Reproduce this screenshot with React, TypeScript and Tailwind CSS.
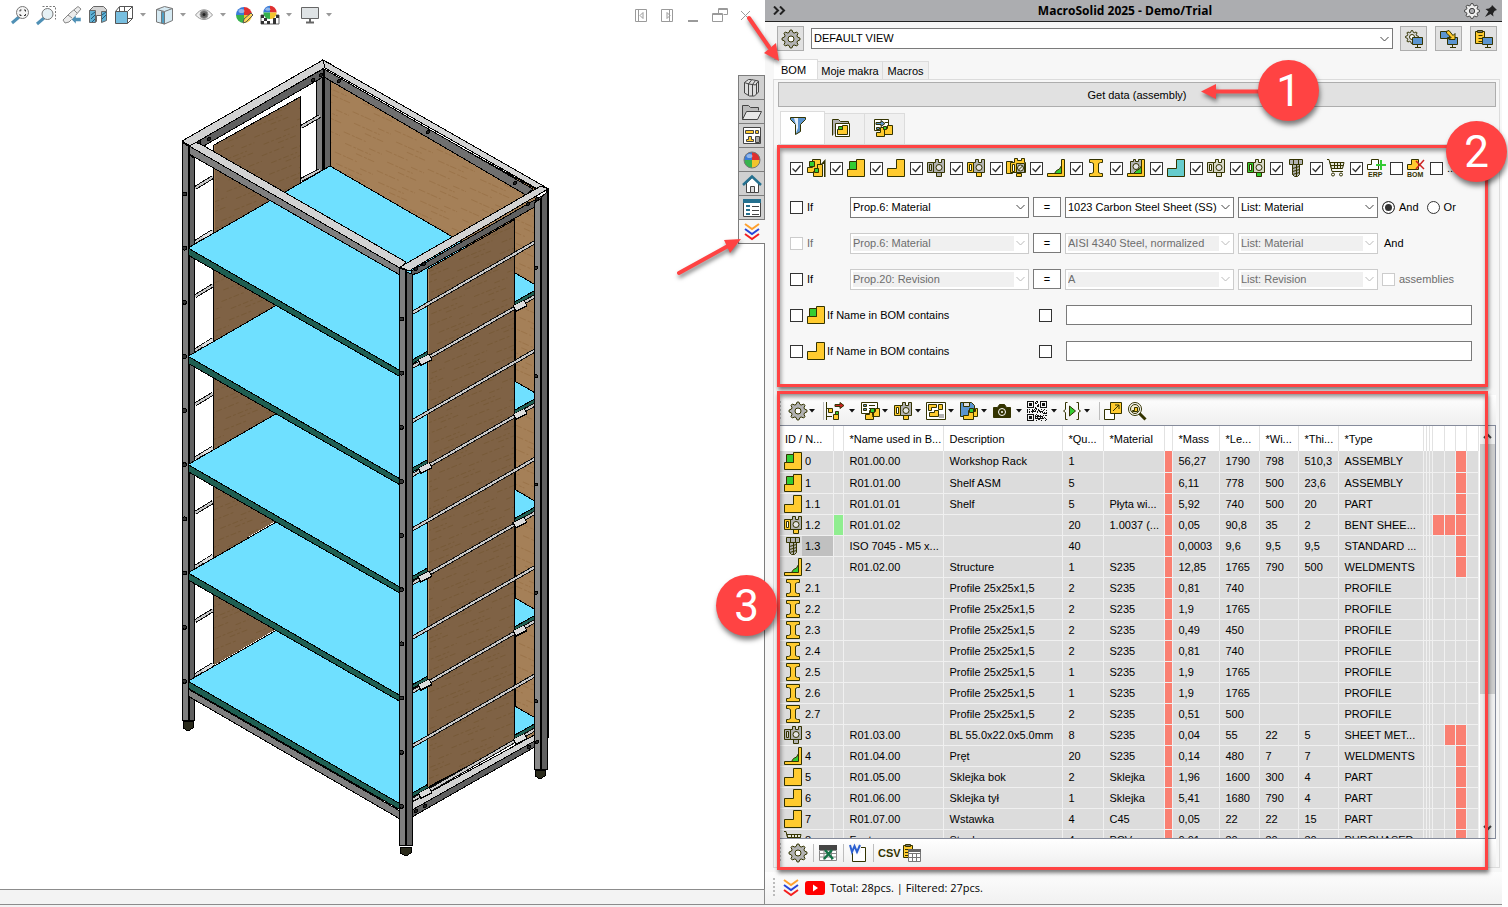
import type { ReactNode } from 'react';

const INK = '#333300';
const GOLD = '#ffcb2f';
const GREEN = '#33cc33';
const STEEL = '#b2b2b2';
const BLUE = '#5b94cf';

const gearPoints = (c: number, outer: number, inner: number, teeth = 8) =>
  Array.from({ length: teeth * 4 }, (_, i) => {
    const angle = ((i - 0.5) / (teeth * 4)) * Math.PI * 2;
    const r = i % 4 < 2 ? outer : inner;
    return `${(c + r * Math.cos(angle)).toFixed(2)},${(c + r * Math.sin(angle)).toFixed(2)}`;
  }).join(' ');

const qrCells = Array.from({ length: 400 }, (_, i) => ({ x: i % 20, y: Math.floor(i / 20) })).filter(
  ({ x, y }) => !(x < 8 && y < 8) && !(x > 11 && y < 8) && !(x < 8 && y > 11) && (x * 7 + y * 13 + x * y * 3 + ((x ^ y) << 1)) % 5 < 2,
);

const Sheet = ({ left, right, tab, slot = '#fff' }: { left: string; right: string; tab: string; slot?: string }) => (
  <>
    <path d="M.5 3.5h6v10h-6z" fill={left} />
    <path d="M9.5 13.5h5v4h-5z" fill={tab} />
    <path d="M6.5 3.5h2v-3h3v3h3v-3h3v13h-11z" fill={right} />
    <path d="M2.5 5.5h2v6h-2z" fill={slot} />
    <circle cx="12" cy="8.5" r="3" fill="#e4e4e4" />
  </>
);

const icons: Record<string, ReactNode> = {
  multi: (
    <>
      <path d="M.5 8.5h5v-8h8v5h-3v8h-10z" fill={GOLD} />
      <path d="M6.5 12.5h4v-7h5v12h-9z" fill={GOLD} />
      <path d="M2.5 2.5h5v5h-5zM7.5 9.5h4v4h-4z" fill={GREEN} />
      <path d="M14 5l4.5-5v18H17V5z" fill={INK} stroke="none" />
    </>
  ),
  assembly: (
    <>
      <path d="M.5 10.5h9v-10h8v17h-17z" fill={GOLD} />
      <path d="M2.5 2.5h7v8h-7z" fill={GREEN} />
    </>
  ),
  part: <path d="M.5 9.5h9v-9h8v17h-17z" fill={GOLD} />,
  tealPart: <path d="M.5 9.5h9v-9h8v17h-17z" fill="#66cccc" />,
  sheet: <Sheet left={STEEL} right={STEEL} tab={STEEL} slot="#d0d0d0" />,
  bent: <Sheet left={GOLD} right={STEEL} tab={GOLD} />,
  bentMulti: (
    <>
      <path d="M-.5 2.5h6v12h-6z" fill={GOLD} />
      <path d="M9.5 14.5h5v3h-5z" fill={GOLD} />
      <path d="M3.5 3.5h4v-4h3v2h4v-2h3v4h1v10h-15z" fill={GOLD} />
      <path d="M5.5 5.5h2v7h-2z" fill="#fff" />
      <path d="M9.5 4.5h8v9h-8z" fill={STEEL} />
      <circle cx="13.5" cy="9" r="3" fill="#e4e4e4" />
      <path d="M11.5 11l4-4" />
    </>
  ),
  weld: (
    <>
      <path d="M7.5 14.5l2-3 3-1.5 2-3.5v8z" fill={GREEN} />
      <path d="M14.5.5h3v17h-17v-3h14z" fill={GOLD} />
    </>
  ),
  profile: <path d="M2.5.5h13v3h-2l-2 1v9l2 1h2v3h-13v-3h2l2-1v-9l-2-1h-2z" fill={GOLD} />,
  weldSheet: (
    <>
      <path d="M3.5 2.5h3v-2h2v2h3v-2h3v14h-11z" fill={STEEL} />
      <circle cx="9" cy="7.5" r="3" fill="#e4e4e4" />
      <path d="M6.5 14.5l3-3 3-1.5 2-3.5v8z" fill={GREEN} />
      <path d="M14.5.5h3v17h-17v-3h14z" fill={GOLD} />
    </>
  ),
  lightSheet: <Sheet left="#d8d8c8" right="#d8d8c8" tab="#d8d8c8" />,
  greenSheet: <Sheet left={GREEN} right="#d8d8c8" tab={GREEN} />,
  bolt: (
    <>
      <path d="M2.5.5h13v5h-13z" fill={STEEL} />
      <path d="M5.5 5.5h7v10l-2 2h-3l-2-2z" fill={STEEL} />
      <path d="M6.5.5v5M11.5.5v5M5.5 9.5l7-2M5.5 12.5l7-2M5.5 15.5l7-2M9.5 6v11" />
    </>
  ),
  cart: (
    <>
      <path d="M0 .5h2l3 12h11" fill="none" />
      <path d="M3 3.5h14l-1.5 6h-11zM3.5 6.5h13M7.5 3.5v6M10.5 3.5v6M13.5 3.5v6" fill="#e6e6da" />
      <circle cx="6" cy="15.5" r="1.5" fill="none" />
      <circle cx="14" cy="15.5" r="1.5" fill="none" />
    </>
  ),
  erp: (
    <>
      <path d="M.5 5.5h4v-5h7v10h-11z" fill="#fff" />
      <path d="M14 1v10M9 6h10" stroke={GREEN} strokeWidth="2" />
      <text x="1" y="18" fontSize="7" fontWeight="700" fill={INK} stroke="none">ERP</text>
    </>
  ),
  bomRemove: (
    <>
      <path d="M.5 5.5h4v-5h7v10h-11z" fill={GOLD} />
      <path d="M9 2l8 8M17 1l-8 9" stroke="#cc2222" strokeWidth="1.5" />
      <text x="0" y="18" fontSize="7" fontWeight="700" fill={INK} stroke="none">BOM</text>
    </>
  ),
  gear: (
    <>
      <polygon points={gearPoints(9, 9, 6.8)} fill={STEEL} />
      <circle cx="9" cy="9" r="3" fill="#fff" />
    </>
  ),
  gearScreen: (
    <>
      <polygon points={gearPoints(7, 6.5, 4.8)} fill="#d8d8d8" />
      <circle cx="7" cy="7" r="2.5" fill="#fff" />
      <path d="M7.5 7.5h10v7h-10z" fill={BLUE} />
      <path d="M12.5 15v2M10 17.5h6" />
    </>
  ),
  moveScreen: (
    <>
      <path d="M.5 1.5h9v7h-9zM7.5 7.5h10v7h-10z" fill={BLUE} />
      <path d="M6 1.5l3-1 4 5 2-2v6h-6l2-2-4-4z" fill={GOLD} />
      <path d="M12.5 15v2M10 17.5h6" />
    </>
  ),
  pasteScreen: (
    <>
      <path d="M.5 1.5h9v12h-9z" fill={GOLD} />
      <path d="M3.5 5.5h4M3.5 8.5h4M3.5 11.5h4" />
      <path d="M2.5.5h5v2h-5z" fill="#777" />
      <path d="M7.5 7.5h10v7h-10z" fill={BLUE} />
      <path d="M12.5 15v2M10 17.5h6" />
    </>
  ),
  funnel: (
    <>
      <path d="M.5.5h15v2l-5 5v7l-5 3v-10l-5-5z" fill={BLUE} />
      <path d="M4 1h4v10l-2 5V8z" fill="#e9f1fa" stroke="none" />
    </>
  ),
  folderPart: (
    <>
      <path d="M.5 16.5v-16h6l2 2h8v3" fill={STEEL} />
      <path d="M3.5 4.5h14v13h-14z" fill="#fff" />
      <path d="M5.5 10.5h5v-4h5v9h-10z" fill={GOLD} />
      <path d="M6.5 7.5h4v3h-4z" fill={GREEN} />
    </>
  ),
  formPart: (
    <>
      <path d="M.5.5h14v11h-14z" fill="#fff" />
      <path d="M2 3.5h5v-2l4 3-4 3v-2H2z" fill={BLUE} />
      <path d="M2.5 8.5h3v2h-3zM11 3.5h3" fill={BLUE} />
      <path d="M2.5 13.5h4v-5h4v9h-8zM10.5 12.5v-3h3v-3h5v9h-8z" fill={GOLD} />
      <path d="M9.5 7.5h3v3h-3z" fill={GREEN} />
    </>
  ),
  tree: (
    <>
      <path d="M.5 0v18M1 6.5h3M1 14.5h5" />
      <path d="M2.5 6.5h4v4h-4zM7.5 12.5h5v5h-5z" fill={GOLD} />
      <path d="M9 2.5h5v-2l4 3-4 3v-2H9z" fill="#cc2222" />
      <path d="M9.5 9.5h3v3h-3z" fill={GREEN} />
    </>
  ),
  formAsm: (
    <>
      <path d="M.5.5h16v11h-16z" fill="#fff" />
      <path d="M2.5 2.5h3v2h-3zM2.5 6.5h3v2h-3z" fill={BLUE} />
      <path d="M8 3.5h6M8 6.5h6" />
      <path d="M4.5 12.5h4v-4h4v9h-8zM11.5 13.5v-4h3v-3h4v8h-7z" fill={GOLD} />
      <path d="M9.5 6.5h4v4h-4z" fill={GREEN} />
    </>
  ),
  drawing: (
    <>
      <path d="M-.5.5h19v17h-19z" fill="#fff" />
      <path d="M1.5 2.5h8v3h-5v3h-3zM2.5 14.5v-4h5v-2h4v6zM11.5 2.5h4v5h-4z" fill={GOLD} />
      <path d="M12 12h5v4h-5z" fill={STEEL} stroke="none" />
    </>
  ),
  save: (
    <>
      <path d="M.5.5h11l3 3v11h-14z" fill={BLUE} />
      <path d="M3.5.5h6v4h-6z" fill="#ddd" />
      <path d="M3.5 13.5h5v-5h5v9h-10z" fill={GOLD} />
      <path d="M13.5 14.5v-5h2v-3h2v8z" fill={GOLD} />
      <path d="M9.5 6.5h4v4h-4z" fill={GREEN} />
    </>
  ),
  camera: (
    <>
      <path d="M.5 5.5h4l2-3h5l2 3h4v10h-17z" fill={INK} />
      <circle cx="9" cy="10" r="3.5" fill={INK} stroke="#fff" />
      <circle cx="9" cy="10" r="1" fill="#fff" stroke="none" />
    </>
  ),
  play: (
    <>
      <path d="M4.5.5h-2v7l-2 1.5 2 1.5v7h2M13.5.5h2v7l2 1.5-2 1.5v7h-2" fill="none" />
      <path d="M6.5 4v10l6-5z" fill={GREEN} />
    </>
  ),
  popout: (
    <>
      <path d="M.5 7.5h10v10h-10z" fill="#fff" />
      <path d="M6.5.5h11v11h-11z" fill={GOLD} />
      <path d="M9 9l6-6M11 3h4v4" />
    </>
  ),
  findPart: (
    <>
      <circle cx="7" cy="7" r="6.5" fill="#fff" />
      <circle cx="7" cy="7" r="4.5" fill="#f3ecd0" />
      <path d="M4.5 8.5h2v-3h3v4h-5z" fill={GOLD} />
      <path d="M11.5 11.5l6 6" strokeWidth="3" />
    </>
  ),
  excel: (
    <>
      <path d="M0 1h18v5H0z" fill="#444" stroke="none" />
      <path d="M.5 6.5h17v10h-17zM.5 9.5h17M.5 13h17M5 6v10M12.5 6v10" fill="#fff" stroke="#888" />
      <path d="M6 6l8 9M13 6l-8 9" stroke="#157347" strokeWidth="2.5" />
    </>
  ),
  word: (
    <>
      <path d="M3.5 3.5h13v14h-13z" fill="#fff" />
      <path d="M0 0h12v9H0z" fill="#f7f7f7" stroke="none" />
      <path d="M1 1l2 7 2.5-6L8 8l3-7" fill="none" stroke="#2b5fd0" strokeWidth="2" />
    </>
  ),
  pasteTable: (
    <>
      <path d="M.5 1.5h9v12h-9z" fill={GOLD} />
      <path d="M2.5.5h5v2h-5z" fill="#777" />
      <path d="M2 5.5h3M2 8.5h3M2 11.5h3" />
      <path d="M5.5 5.5h12v12h-12zM5.5 9.5h12M5.5 13.5h12M9.5 9v8M13.5 9v8" fill="#fff" stroke="#777" />
      <path d="M5 5h13v3H5z" fill="#666" stroke="none" />
    </>
  ),
  chevrons: (
    <g fill="none" strokeWidth="2">
      <path d="M2 1l7 5 7-5" stroke="#ffa02e" />
      <path d="M2 6l7 5 7-5" stroke="#2745d8" />
      <path d="M2 11l7 5 7-5" stroke="#f41f1f" />
    </g>
  ),
  books: (
    <g fill="#ddd" stroke="#444">
      <path d="M1.5 3.5l4-3h3l2 .5 5 1v11l-4 4h-5l-5-3z" />
      <path d="M5.5 4.5v12M9.5 5v12M13.5 4v11M1.5 3.5l4 1.5 3-4M5.5 5l4 .5 3-4M9.5 5.5l3 .5 3-4" />
    </g>
  ),
  folder: (
    <g stroke="#444">
      <path d="M-.5 16.5v-14h6l2 2h8v3" fill="#bbb" />
      <path d="M-.5 16.5l4-8h15l-4 8z" fill="#e8e8e8" />
    </g>
  ),
  viewPalette: (
    <g stroke="#444">
      <path d="M.5.5h17v16h-17z" fill="#fff" />
      <path d="M2.5 3.5h8v3h-8zM12.5 3.5h3v3h-3zM5.5 9.5h3v3h2v2h-7v-2h2z" fill={GOLD} />
      <path d="M12.5 9.5h4v6h-4z" fill="#aaa" />
    </g>
  ),
  house: (
    <g stroke="#444">
      <path d="M3.5 8v9.5h12V8l-6-6z" fill="#fff" />
      <path d="M7.5 11.5h4v6h-4z" fill="#ddd" />
      <path d="M0 10l9-8.5L18 10" fill="none" stroke="#25708f" strokeWidth="2.5" />
    </g>
  ),
  properties: (
    <g stroke="#444">
      <path d="M.5.5h17v17h-17z" fill="#fff" />
      <path d="M0 0h18v4H0z" fill="#25708f" stroke="none" />
      <path d="M3 6h4v2H3zM3 10h4v2H3zM3 14h4v2H3z" fill="#25708f" stroke="none" />
      <path d="M9 7.5h7M9 11.5h7M9 15.5h7" />
    </g>
  ),
};

const Ball = () => (
  <g stroke="none">
    <path d="M9 1a8 8 0 0 0-8 8h8z" fill="#3a7bd8" />
    <path d="M9 1v8h8a8 8 0 0 0-8-8z" fill="#df3030" />
    <path d="M17 9a8 8 0 0 1-8 8V9z" fill="#f2c42d" />
    <path d="M1 9a8 8 0 0 0 8 8V9z" fill="#37b24d" />
    <ellipse cx="6.5" cy="5" rx="3" ry="2" fill="#fff" opacity=".45" />
  </g>
);

icons.ball = <><Ball /><circle cx="9" cy="9" r="8" fill="none" stroke="#777" /></>;
icons.qr = (
  <g fill="#111" stroke="none" shapeRendering="crispEdges" transform="translate(-1 -1)">
    {[[0, 0], [13, 0], [0, 13]].map(([x, y]) => (
      <path key={`${x}-${y}`} fillRule="evenodd" d={`M${x} ${y}h7v7h-7zM${x + 1} ${y + 1}v5h5v-5zM${x + 2} ${y + 2}h3v3h-3z`} />
    ))}
    {qrCells.map(({ x, y }) => <rect key={`${x}.${y}`} x={x} y={y} width="1" height="1" />)}
  </g>
);

// heads-up view toolbar
icons.zoomFit = (
  <g stroke="#777">
    <path d="M8 11l-7 6" stroke="#4f90b5" strokeWidth="3" />
    <circle cx="11.5" cy="6.5" r="6" fill="#f4f4f4" />
    <path d="M9 5.5V4h1.5M13 4h1.5v1.5M14.5 8v1.5H13M10.5 9.5H9V8" fill="none" stroke="#333" />
  </g>
);
icons.zoomArea = (
  <g stroke="#777">
    <path d="M5.5.5h13v13" fill="none" strokeDasharray="2 1.5" />
    <path d="M7 12l-7 6" stroke="#4f90b5" strokeWidth="3" />
    <circle cx="10.5" cy="8" r="5.5" fill="#e6f1f5" />
  </g>
);
icons.previous = (
  <g stroke="#888">
    <path d="M0 14l7-7 8-6.5 3 2.5-6 7-6 6-4 1z" fill="#ececec" />
    <path d="M5 9l4 3M11 4l3 3" />
    <path d="M18 11.5h-5V9l-4.5 4.5L13 18v-2.5h5z" fill="#4f90b5" stroke="#fff" strokeWidth=".5" />
  </g>
);
icons.section = (
  <g stroke="#666">
    <path d="M.5 4.5l4-4h10l3 3v10l-5 2v-6h-5v6l-7-1z" fill="#d5d5d5" />
    <path d="M.5 4.5h6v12h-6zM12.5 5.5h5v9l-5 2z" fill="#5fb0d4" />
    <path d="M2 9l4-3M2 13l4-4M3 16l3-3M13 9l4-3M13 13l4-4" stroke="#1c5b7c" />
  </g>
);
icons.orient = (
  <g stroke="#555">
    <path d="M4.5.5h13v12h-5M.5 5.5l4-5M12.5 5.5l5-5M12.5 17.5l5-5M9.5.5v5M4.5 5V1" fill="none" />
    <path d="M.5 5.5h12v12h-12z" fill="#78bfe0" />
  </g>
);
icons.cube = (
  <g stroke="#777">
    <path d="M1.5 3.5l8-3 8 2v12l-8 3.5-8-2z" fill="#d6eaf3" />
    <path d="M6.5 5.5l3 1V18l-3-1z" fill="#4f9fc4" />
    <path d="M1.5 3.5l8 2 8-3M9.5 5.5V18" fill="none" />
  </g>
);
icons.eye = (
  <g stroke="#999">
    <path d="M.5 9c5-7 12-7 17 0-5 6-12 6-17 0z" fill="#efefef" />
    <circle cx="9" cy="8.5" r="4" fill="#666" />
    <circle cx="9" cy="8.5" r="1.5" fill="#222" stroke="none" />
  </g>
);
icons.appearance = (
  <>
    <Ball />
    <path d="M8 17l1-4 7-6 2 2-7 7z" fill="#ffd65a" stroke="#555" />
  </>
);
icons.scene = (
  <>
    <path d="M0 9h18v9H0z" fill="#fff" stroke="#666" />
    <path d="M0 9h3v3H0zM15 9h3v3h-3zM0 15h3v3H0zM3 12h3v3H3zM12 12h3v3h-3zM6 15h3v3H6zM12 15h3v3h-3z" fill="#333" stroke="none" />
    <g transform="translate(1.5 -1) scale(.83)"><Ball /></g>
  </>
);
icons.monitor = (
  <g stroke="#666">
    <path d="M.5 1.5h17v11h-17z" fill="#dfe3e5" />
    <path d="M9 13v3M5 16.5h8" strokeWidth="2" />
  </g>
);

const Icon = ({ name }: { name: string }) => (
  <svg width="18" height="18" viewBox="0 0 18 18" stroke={INK} fill="none" className="shrink-0 overflow-visible" aria-hidden="true">
    {icons[name]}
  </svg>
);

const DropArrow = ({ color = '#111' }: { color?: string }) => (
  <svg width="6" height="4" viewBox="0 0 6 4" aria-hidden="true">
    <path d="M0 0h6L3 3.5z" fill={color} />
  </svg>
);

const Check = ({ label, checked = false, disabled = false, children }: { label: string; checked?: boolean; disabled?: boolean; children?: ReactNode }) => (
  <label className={`flex items-center gap-1 ${disabled ? 'text-[#6d6d6d]' : ''}`}>
    <span className="grid shrink-0">
      <input
        type="checkbox"
        aria-label={label}
        defaultChecked={checked}
        disabled={disabled}
        className="peer col-start-1 row-start-1 size-[13px] appearance-none border border-[#333333] bg-white disabled:border-[#cccccc]"
      />
      <svg width="13" height="13" viewBox="0 0 13 13" className="pointer-events-none invisible col-start-1 row-start-1 peer-checked:visible" aria-hidden="true">
        <path d="M2.5 6.5l3 3 5-6" fill="none" stroke="#333" strokeWidth="1.3" />
      </svg>
    </span>
    {children}
  </label>
);

const Combo = ({ label, value, disabled = false }: { label: string; value: string; disabled?: boolean }) => (
  <div className={`flex h-[21px] w-full min-w-0 items-center border bg-white p-0.5 ${disabled ? 'border-[#cccccc]' : 'border-[#7a7a7a]'}`}>
    <select
      aria-label={label}
      disabled={disabled}
      className={`h-[15px] min-w-0 flex-1 appearance-none leading-[15px] outline-none ${disabled ? 'bg-[#f0f0f0] text-[#6d6d6d] opacity-100' : 'bg-white text-black'}`}
    >
      <option>{value}</option>
    </select>
    <svg width="12" height="8" viewBox="0 0 12 8" className="shrink-0" aria-hidden="true">
      <path d="M2.5 2l4 4 4-4" fill="none" stroke={disabled ? '#bbb' : '#444'} />
    </svg>
  </div>
);

const typeFilters = [
  ['multi', true], ['assembly', true], ['part', true], ['sheet', true], ['bent', true], ['bentMulti', true],
  ['weld', true], ['profile', true], ['weldSheet', true], ['tealPart', true], ['lightSheet', true], ['greenSheet', true],
  ['bolt', true], ['cart', true], ['erp', true], ['bomRemove', false],
] as const;

const columns = [54, 10, 100, 119, 41, 61, 8, 47, 40, 39, 40, 85, 3, 3, 3, 12, 11, 11, 12];
const headers = ['ID / N...', '', '*Name used in B...', 'Description', '*Qu...', '*Material', '', '*Mass', '*Le...', '*Wi...', '*Thi...', '*Type', '', '', '', '', '', '', ''];

type Row = {
  icon: string;
  // id, name, description, qty, material, mass, length, width, thickness, type
  cells: string[];
  // how many of the trailing cells are flagged, counted from the right one
  flags: number;
};

const rows: Row[] = [
  { icon: 'assembly', cells: ['0', 'R01.00.00', 'Workshop Rack', '1', '', '56,27', '1790', '798', '510,3', 'ASSEMBLY'], flags: 1 },
  { icon: 'assembly', cells: ['1', 'R01.01.00', 'Shelf ASM', '5', '', '6,11', '778', '500', '23,6', 'ASSEMBLY'], flags: 1 },
  { icon: 'part', cells: ['1.1', 'R01.01.01', 'Shelf', '5', 'Płyta wi...', '5,92', '740', '500', '20', 'PART'], flags: 1 },
  { icon: 'bent', cells: ['1.2', 'R01.01.02', '', '20', '1.0037 (...', '0,05', '90,8', '35', '2', 'BENT SHEE...'], flags: 3 },
  { icon: 'bolt', cells: ['1.3', 'ISO 7045 - M5 x...', '', '40', '', '0,0003', '9,6', '9,5', '9,5', 'STANDARD ...'], flags: 1 },
  { icon: 'weld', cells: ['2', 'R01.02.00', 'Structure', '1', 'S235', '12,85', '1765', '790', '500', 'WELDMENTS'], flags: 1 },
  { icon: 'profile', cells: ['2.1', '', 'Profile 25x25x1,5', '2', 'S235', '0,81', '740', '', '', 'PROFILE'], flags: 0 },
  { icon: 'profile', cells: ['2.2', '', 'Profile 25x25x1,5', '2', 'S235', '1,9', '1765', '', '', 'PROFILE'], flags: 0 },
  { icon: 'profile', cells: ['2.3', '', 'Profile 25x25x1,5', '2', 'S235', '0,49', '450', '', '', 'PROFILE'], flags: 0 },
  { icon: 'profile', cells: ['2.4', '', 'Profile 25x25x1,5', '2', 'S235', '0,81', '740', '', '', 'PROFILE'], flags: 0 },
  { icon: 'profile', cells: ['2.5', '', 'Profile 25x25x1,5', '1', 'S235', '1,9', '1765', '', '', 'PROFILE'], flags: 0 },
  { icon: 'profile', cells: ['2.6', '', 'Profile 25x25x1,5', '1', 'S235', '1,9', '1765', '', '', 'PROFILE'], flags: 0 },
  { icon: 'profile', cells: ['2.7', '', 'Profile 25x25x1,5', '2', 'S235', '0,51', '500', '', '', 'PROFILE'], flags: 0 },
  { icon: 'sheet', cells: ['3', 'R01.03.00', 'BL 55.0x22.0x5.0mm', '8', 'S235', '0,04', '55', '22', '5', 'SHEET MET...'], flags: 2 },
  { icon: 'weld', cells: ['4', 'R01.04.00', 'Pręt', '20', 'S235', '0,14', '480', '7', '7', 'WELDMENTS'], flags: 1 },
  { icon: 'part', cells: ['5', 'R01.05.00', 'Sklejka bok', '2', 'Sklejka', '1,96', '1600', '300', '4', 'PART'], flags: 1 },
  { icon: 'part', cells: ['6', 'R01.06.00', 'Sklejka tył', '1', 'Sklejka', '5,41', '1680', '790', '4', 'PART'], flags: 1 },
  { icon: 'part', cells: ['7', 'R01.07.00', 'Wstawka', '4', 'C45', '0,05', '22', '22', '15', 'PART'], flags: 1 },
  { icon: 'cart', cells: ['8', 'Foot', 'Stopka', '4', 'PCV', '0,01', '30', '30', '30', 'PURCHASED'], flags: 1 },
];

const BomTable = () => (
  <table className="w-[699px] table-fixed border-collapse">
    <colgroup>
      {columns.map((width, i) => <col key={i} style={{ width }} />)}
    </colgroup>
    <thead>
      <tr className="h-[25px] bg-white">
        {headers.map((text, i) => (
          <th key={i} className="overflow-hidden border-r border-[#e2e2e2] p-0 text-left font-normal whitespace-nowrap">
            {text && <span className="pl-[6px]">{text}</span>}
          </th>
        ))}
      </tr>
    </thead>
    <tbody>
      {rows.map(({ icon, cells, flags }) => {
        const [id, name, description, qty, material, ...rest] = cells;
        return (
          <tr key={id} className="h-[21px] bg-[#dcdcdc]">
            <td className="border-r border-b border-[#f0f0f0] p-0">
              <div className="flex h-5 items-center pl-[5px]">
                <Icon name={icon} />
                <span className={`flex h-5 flex-1 items-center pl-[3px] ${id === '1.3' ? 'bg-[#c0c0c0]' : ''}`}>{id}</span>
              </div>
            </td>
            <td className={`border-r border-b border-[#f0f0f0] p-0 ${id === '1.2' ? 'bg-[#90ee90]' : ''}`} />
            {[name, description, qty, material].map((text, i) => (
              <td key={i} className="overflow-hidden border-r border-b border-[#f0f0f0] py-0 pr-0 pl-[6px] whitespace-nowrap">{text}</td>
            ))}
            <td className="border-r border-b border-[#f0f0f0] bg-[#fa8072] p-0" />
            {rest.map((text, i) => (
              <td key={i} className="overflow-hidden border-r border-b border-[#f0f0f0] py-0 pr-0 pl-[6px] whitespace-nowrap">{text}</td>
            ))}
            {[0, 0, 0, 3, 2, 1, 0].map((flag, i) => (
              <td key={i} className={`border-r border-b border-[#f0f0f0] p-0 ${flag > 0 && flag <= flags ? 'bg-[#fa8072]' : ''}`} />
            ))}
          </tr>
        );
      })}
    </tbody>
  </table>
);

const PITCH = 108.3;
const levels = [0, 1, 2, 3, 4];

const Rod = ({ x1, y1, x2, y2 }: { x1: number; y1: number; x2: number; y2: number }) => (
  <>
    <line x1={x1} y1={y1} x2={x2} y2={y2} stroke="#111" strokeWidth="4" />
    <line x1={x1} y1={y1} x2={x2} y2={y2} stroke="#c8c8c8" strokeWidth="2" />
  </>
);

const RackModel = () => (
  <svg width="380" height="810" viewBox="175 55 380 810" shapeRendering="crispEdges" className="shrink-0" role="img" aria-label="Workshop rack">
    <defs>
      <pattern id="woodLight" width="46" height="22" patternUnits="userSpaceOnUse" patternTransform="rotate(24)">
        <rect width="46" height="22" fill="#a58058" />
        <path d="M0 3h24M30 8h14M6 13h28M20 18h20" stroke="#9b744a" strokeWidth="1" strokeDasharray="7 2 3 1" fill="none" />
      </pattern>
      <pattern id="woodDark" width="46" height="20" patternUnits="userSpaceOnUse" patternTransform="rotate(-22)">
        <rect width="46" height="20" fill="#7f6245" />
        <path d="M0 3h24M30 8h14M6 13h28M20 17h20" stroke="#775a38" strokeWidth="1" strokeDasharray="6 2 3 2" fill="none" />
      </pattern>
    </defs>
    <g stroke="#000" strokeWidth="1">
      {/* back wall and back leg */}
      <path d="M329 76L536 190V740L515 745V300L329 300z" fill="url(#woodLight)" />
      <path d="M316 78h6v95h-6z" fill="#7f7f7f" />
      <path d="M324 76h6v92l-6 3z" fill="#636363" />
      <path d="M323 72v100" strokeWidth="2" />
      <Rod x1={301} y1={128} x2={320} y2={117} />
      <Rod x1={301} y1={181} x2={320} y2={171} />

      {/* left side panel */}
      <path d="M214 146L300 98V340L214 665z" fill="url(#woodDark)" />
      <path d="M214 146v519" stroke="#a07a52" strokeWidth="2" />
      <path d="M213 146v519" />
      {levels.map((n) => (
        <g key={n}>
          <Rod x1={195} y1={189 + n * PITCH} x2={213} y2={178 + n * PITCH} />
          <Rod x1={195} y1={243 + n * PITCH} x2={213} y2={232 + n * PITCH} />
          <path d={`M203 ${239 + n * PITCH}l10 -6`} stroke="#ddd" strokeWidth="4" />
        </g>
      ))}
      <path d="M189 156l5 3v562h-5z" fill="#606060" />

      {/* lower front beam */}
      <path d="M188 690L400 812V820L188 697z" fill="#7f7f7f" />

      {[...levels].reverse().map((n) => {
        const y = n * PITCH;
        return (
          <g key={n}>
            {n > 0 && <path d={`M214 ${146 + y}L300 ${190 + y}V${183 + y}L214 ${233 + y}z`} fill="url(#woodDark)" stroke="none" />}
            <path d={`M188 ${249 + y}L330 ${167 + y}L541 ${289 + y}L405 ${366 + y}L399 ${371 + y}z`} fill="#6fe0ff" />
            <path d={`M188 ${249 + y}L399 ${371 + y}V${377 + y}L188 ${256 + y}z`} fill="#1f5f52" />
            <path d={`M405 ${365 + y}L541 ${288 + y}v4L405 ${369 + y}z`} fill="#1f5f52" />
          </g>
        );
      })}

      {/* lower side beam */}
      <path d="M412 803L538 734L540 739L412 811z" fill="#d3d3d3" />
      <path d="M412 811L540 739V745L412 818z" fill="#606060" />

      {/* top frame */}
      <path d="M196 143L323 70V78L202 148z" fill="#606060" />
      <path d="M182 142L323 61L331 65L190 147z" fill="#d3d3d3" />
      <path d="M324 70L533 190L526 196L324 78z" fill="#707070" />
      <path d="M323 61L547 189L541 192L325 69z" fill="#d3d3d3" />
      <path d="M189 147L400 269V276L189 155z" fill="#7f7f7f" />
      <path d="M197 143L406 263L400 269L189 147z" fill="#d3d3d3" />

      {/* right side panel */}
      <path d="M428 270L514 221V743L428 788z" fill="url(#woodDark)" />
      <path d="M428 270v518" stroke="#b08a5e" strokeWidth="2" />
      <path d="M427 270v518" />
      <path d="M411 272L547 194V201L418 274L411 276z" fill="#606060" />
      <path d="M400 268L541 187L548 190L409 272z" fill="#d3d3d3" />
      <path d="M547 189v550" strokeWidth="3" />
      {levels.map((n) => (
        <g key={n}>
          <Rod x1={412} y1={314 + n * PITCH} x2={537} y2={242 + n * PITCH} />
          <Rod x1={412} y1={368 + n * PITCH} x2={537} y2={296 + n * PITCH} />
          <path d={`M419 ${364 + n * PITCH}l12 -6M514 ${310 + n * PITCH}l12 -6`} strokeWidth="7" />
          <path d={`M420 ${363 + n * PITCH}l10 -5M515 ${309 + n * PITCH}l10 -5`} stroke="#dcdcdc" strokeWidth="5" />
        </g>
      ))}

      {/* legs */}
      <path d="M182 143l6 4v574h-6z" fill="#7f7f7f" />
      <path d="M399 269l6 2v575h-6z" fill="#7f7f7f" />
      <path d="M406 273l6 2v571h-6z" fill="#606060" />
      <path d="M405.5 271v576" strokeWidth="2" />
      <path d="M534 204l6-4v570h-6z" fill="#8a8a8a" />
      <path d="M541 199l6-6v577h-6z" fill="#606060" />
      <path d="M183 722h10v7l-5 3-5-3zM400 848h11v6l-5 3-6-3zM535 771h10v6l-5 3-5-3z" fill="#2b2b1c" />
      {levels.flatMap((n) => [0, 54.1].map((half) => (
        <g key={`${n}-${half}`} fill="#333">
          <circle cx="184.5" cy={195 + n * PITCH + half} r="2" />
          <circle cx="401.5" cy={320 + n * PITCH + half} r="2" />
          {half === 0 && <circle cx="536" cy={269 + n * PITCH} r="1.5" />}
        </g>
      )))}
      <g fill="#222">
        {[[313, 81], [321, 76], [339, 82], [428, 133], [515, 184], [209, 140], [199, 143], [416, 270], [424, 265], [528, 205], [537, 200], [416, 812], [425, 807], [529, 748], [537, 743]].map(([x, y]) => (
          <circle key={`${x}-${y}`} cx={x} cy={y} r="1.5" />
        ))}
      </g>
    </g>
  </svg>
);

const viewTools = ['zoomFit', 'zoomArea', 'previous', 'section', 'orient+', 'cube+', 'eye+', 'appearance', 'scene+', 'monitor+'];
const paneTabs = ['books', 'folder', 'viewPalette', 'ball', 'house', 'properties'];

const windowControls = [
  'M.5 1.5h11v12h-11zM3.5 1.5v12M8 4.5v6l-3-3z',
  'M.5 1.5h11v12h-11zM8.5 1.5v12M6 4.5v6l3-3z',
  'M1 12.5h10M1 13.5h10',
  'M5.5.5h9v6h-4M5.5.5v5M-.5 5.5h10v8h-10zM-.5 6.5h10M5.5 1.5h9',
  'M2 3l9 9M11 3l-9 9',
];

const Viewport = () => (
  <main className="flex min-w-0 flex-1 flex-col bg-white">
    <header className="flex h-[30px] items-center pl-[7px]">
      {viewTools.map((tool) => (
        <div key={tool} className="flex items-center">
          <button aria-label={tool} className="flex w-[26px] justify-center"><Icon name={tool.replace('+', '')} /></button>
          {tool.endsWith('+') && <button aria-label={`${tool} options`} className="mr-0.5 flex w-3 justify-center"><DropArrow color="#999" /></button>}
        </div>
      ))}
      <div className="ml-auto flex gap-3 pr-3">
        {windowControls.map((d) => (
          <button key={d} aria-label="Window control">
            <svg width="14" height="15" viewBox="0 0 14 15" fill="none" stroke="#9a9a9a" className="overflow-visible"><path d={d} /></svg>
          </button>
        ))}
      </div>
    </header>
    <div className="flex min-h-0 flex-1 justify-between overflow-hidden border-b border-[#8c8c8c]">
      <div className="pt-6 pl-[175px]"><RackModel /></div>
      <div className="flex flex-col">
        <nav className="mt-[45px] flex w-[27px] flex-col border-t border-[#7d7d7d]">
          {paneTabs.map((name) => (
            <button key={name} aria-label={name} className="flex h-6 items-center justify-center border-r border-b border-l border-[#7d7d7d] bg-[#d0d0d0]">
              <Icon name={name} />
            </button>
          ))}
          <button aria-label="MacroSolid" className="flex h-6 items-center justify-center border-b border-l border-[#7d7d7d] bg-[#f7f7f7]">
            <Icon name="chevrons" />
          </button>
        </nav>
        <div className="flex-1 border-r border-[#7d7d7d]" />
      </div>
    </div>
    <div className="h-[15px] border-r border-b border-[#8c8c8c] bg-[#f3f3f3]" />
    <div className="h-0.5 bg-[#f3f3f3]" />
  </main>
);

const conditions = [
  { prop: 'Prop.6: Material', value: '1023 Carbon Steel Sheet (SS)', list: 'List: Material' },
  { prop: 'Prop.6: Material', value: 'AISI 4340 Steel, normalized', list: 'List: Material' },
  { prop: 'Prop.20: Revision', value: 'A', list: 'List: Revision' },
];

const FilterPanel = () => (
  <section className="h-[245px] shrink-0 border-t border-[#dcdcdc] pt-[13px] pl-3">
    <div className="flex h-5">
      {typeFilters.map(([icon, checked]) => (
        <div key={icon} className="flex w-10 shrink-0 items-center">
          <Check label={icon} checked={checked}><Icon name={icon} /></Check>
        </div>
      ))}
      <Check label="other">...</Check>
    </div>
    <div className="pt-[11px]">
      {conditions.map(({ prop, value, list }, i) => (
        <div key={i} className="grid h-9 grid-cols-[56px_179px_28px_169px_140px_1fr] items-center gap-1">
          <Check label="If" disabled={i === 1}>If</Check>
          <Combo label="Property" value={prop} disabled={i > 0} />
          <button className="h-5 border border-[#7a7a7a] bg-white leading-4">=</button>
          <Combo label="Value" value={value} disabled={i > 0} />
          <Combo label="List" value={list} disabled={i > 0} />
          {i === 0 && (
            <div className="flex gap-2">
              {['And', 'Or'].map((text) => (
                <label key={text} className="flex items-center gap-1">
                  <input
                    type="radio"
                    name="operator"
                    defaultChecked={text === 'And'}
                    className="size-[13px] appearance-none rounded-full border border-[#333333] bg-white checked:bg-[#333333] checked:shadow-[inset_0_0_0_2px_white]"
                  />
                  {text}
                </label>
              ))}
            </div>
          )}
          {i === 1 && <span className="pl-0.5">And</span>}
          {i === 2 && <Check label="assemblies" disabled>assemblies</Check>}
        </div>
      ))}
      {['assembly', 'part'].map((icon) => (
        <div key={icon} className="flex h-9 items-center pr-6">
          <div className="w-[249px]">
            <Check label="If Name in BOM contains">
              <span className="flex items-center gap-0.5"><Icon name={icon} />If Name in BOM contains</span>
            </Check>
          </div>
          <Check label="Exclude" />
          <input aria-label="Name contains" className="ml-[14px] h-5 min-w-0 flex-1 border border-[#7a7a7a] bg-white px-1" />
        </div>
      ))}
    </div>
  </section>
);

const Grip = () => <span className="h-5 w-0.5 shrink-0 bg-[repeating-linear-gradient(#bbb_0_2px,transparent_2px_4px)]" />;
const Separator = () => <span className="h-[18px] w-px shrink-0 bg-[#bdbdbd]" />;

const GridToolbar = () => (
  <div className="flex h-[31px] shrink-0 items-center border-b border-[#858b9b] bg-linear-to-b from-white to-[#efefef] pt-0.5 pl-px">
    <Grip />
    <div className="ml-[7px] flex items-center pr-[7px]">
      <button aria-label="Settings" className="flex w-5 justify-center"><Icon name="gear" /></button>
      <span className="flex w-2 justify-center"><DropArrow /></span>
    </div>
    <Separator />
    <div className="flex items-center gap-[5px] pr-2 pl-0.5">
      {['tree', 'formAsm', 'bent', 'drawing', 'save', 'camera', 'qr', 'play'].map((name) => (
        <div key={name} className="flex items-center">
          <button aria-label={name} className={`flex ${['tree', 'camera', 'qr'].includes(name) ? 'w-[22px]' : 'w-5'}`}><Icon name={name} /></button>
          <span className="flex w-2 justify-center"><DropArrow /></span>
        </div>
      ))}
    </div>
    <Separator />
    <div className="flex gap-1 pl-1">
      <button aria-label="Open" className="w-5"><Icon name="popout" /></button>
      <button aria-label="Find" className="w-5"><Icon name="findPart" /></button>
    </div>
  </div>
);

const ScrollBar = () => (
  <div className="flex w-[15px] flex-col items-center bg-[#f0f0f0]">
    <svg width="15" height="18" viewBox="0 0 15 18" aria-hidden="true"><path d="M4 12l3.5-3.5L11 12" fill="none" stroke="#444" strokeWidth="2" /></svg>
    <div className="h-[250px] w-full bg-[#cdcdcd]" />
    <svg width="15" height="18" viewBox="0 0 15 18" className="mt-auto" aria-hidden="true"><path d="M4 6l3.5 3.5L11 6" fill="none" stroke="#444" strokeWidth="2" /></svg>
  </div>
);

const ExportToolbar = () => (
  <div className="flex h-7 shrink-0 items-center bg-linear-to-b from-white to-[#efefef] pl-px">
    <Grip />
    <button aria-label="Settings" className="mr-[6px] ml-2"><Icon name="gear" /></button>
    <Separator />
    <button aria-label="Excel" className="mr-[6px] ml-[5px]"><Icon name="excel" /></button>
    <Separator />
    <button aria-label="Word" className="mr-[6px] ml-[5px]"><Icon name="word" /></button>
    <Separator />
    <button className="w-[29px] pl-1 text-left font-bold text-[#333300]">CSV</button>
    <button aria-label="Copy table"><Icon name="pasteTable" /></button>
  </div>
);

const toolButton = 'flex h-[25px] w-[27px] shrink-0 items-center justify-center border border-[#adadad] bg-[#e1e1e1]';

const TaskPane = () => (
  <aside className="relative flex w-[737px] shrink-0 flex-col bg-[#f7f7f7]">
    <header className="flex h-[22px] shrink-0 items-center border-b border-[#222222] bg-[#acadb0] pr-1 pl-2">
      <svg width="13" height="9" viewBox="0 0 13 9" aria-hidden="true"><path d="M1 .5l4 4-4 4M7 .5l4 4-4 4" fill="none" stroke="#222" strokeWidth="2" /></svg>
      <h1 className="flex-1 text-center font-['Open_Sans',sans-serif] text-[12px] font-bold">MacroSolid 2025 - Demo/Trial</h1>
      <div className="flex items-center gap-1">
        <svg width="16" height="16" viewBox="0 0 18 18" stroke="#333" fill="#eee" aria-hidden="true"><polygon points={gearPoints(9, 8.5, 6.5)} /><circle cx="9" cy="9" r="3" fill="#acadb0" /></svg>
        <svg width="14" height="14" viewBox="0 0 14 14" aria-hidden="true"><path d="M8 1l5 5-1.5.5-1 .5L9 9.5l.5 3-3-2.5L1 13l3.5-5.5L1.5 5 5 4.5l2.5-2z" fill="#222" /></svg>
      </div>
    </header>
    <div className="flex shrink-0 items-center gap-[7px] pt-1 pr-[5px] pl-3">
      <button aria-label="Settings" className={toolButton}><Icon name="gear" /></button>
      <Combo label="View" value="DEFAULT VIEW" />
      <div className="flex gap-2">
        {['gearScreen', 'moveScreen', 'pasteScreen'].map((name) => (
          <button key={name} aria-label={name} className={toolButton}><Icon name={name} /></button>
        ))}
      </div>
    </div>
    <nav className="mt-2 flex h-5 shrink-0 items-end pl-[9px]">
      <button className="h-5 w-11 border-t border-r border-[#dcdcdc] bg-white pl-[7px] text-left">BOM</button>
      <button className="h-[18px] w-[65px] border-t border-r border-[#dcdcdc] bg-[#f0f0f0] text-center whitespace-nowrap">Moje makra</button>
      <button className="h-[18px] w-[46px] border-t border-r border-[#dcdcdc] bg-[#f0f0f0] text-center">Macros</button>
    </nav>
    <div className="mr-0.5 ml-2 flex min-h-0 flex-1 flex-col border border-[#dcdcdc] pt-0.5 pr-[3px] pl-1">
      <button className="h-[25px] shrink-0 border border-[#adadad] bg-[#e1e1e1]">Get data (assembly)</button>
      <nav className="flex h-[37px] shrink-0 items-end pl-0.5">
        <button aria-label="Filter" className="flex h-[33px] w-[45px] justify-center border-x border-t border-[#dcdcdc] bg-white pt-[5px] pr-2"><Icon name="funnel" /></button>
        <button aria-label="Folders" className="flex h-[31px] w-10 justify-center border-t border-r border-[#dcdcdc] bg-[#f0f0f0] pt-[5px] pr-2"><Icon name="folderPart" /></button>
        <button aria-label="Properties" className="flex h-[31px] w-10 justify-center border-t border-r border-[#dcdcdc] bg-[#f0f0f0] pt-[5px] pr-1"><Icon name="formPart" /></button>
      </nav>
      <FilterPanel />
      <div className="mt-1.5 flex min-h-0 flex-1 flex-col">
        <GridToolbar />
        <div className="flex min-h-0 flex-1 border-r border-b border-[#858b9b] bg-white pl-px">
          <div className="min-w-0 flex-1 overflow-hidden"><BomTable /></div>
          <ScrollBar />
        </div>
        <ExportToolbar />
      </div>
    </div>
    <footer className="mt-1 flex h-8 shrink-0 items-center bg-linear-to-b from-[#fdfdfd] to-[#f1f1f1] pl-2">
      <Grip />
      <span className="ml-[7px]"><Icon name="chevrons" /></span>
      <svg width="20" height="14" viewBox="0 0 20 14" className="ml-[5px] shrink-0" aria-hidden="true"><rect width="20" height="14" rx="3" fill="#f00" /><path d="M8 3.5v7l5-3.5z" fill="#fff" /></svg>
      <p className="pl-[5px] font-['Open_Sans',sans-serif]">Total: 28pcs. | Filtered: 27pcs.</p>
    </footer>
    <div className="h-[3px] shrink-0 border-t border-[#8c8c8c]" />

    {/* callout frames over the filter and the grid */}
    <div className="pointer-events-none absolute top-[145px] right-[14px] left-3 h-[242px] border-3 border-[#ff4343] shadow-[1px_3px_4px_rgba(0,0,0,0.5),inset_1px_3px_4px_rgba(0,0,0,0.4)]" />
    <div className="pointer-events-none absolute top-[391px] right-[14px] bottom-[37px] left-3 border-3 border-[#ff4343] shadow-[1px_3px_4px_rgba(0,0,0,0.5),inset_1px_3px_4px_rgba(0,0,0,0.4)]" />
    <svg className="pointer-events-none absolute top-0 left-0 overflow-visible drop-shadow-[1px_3px_2px_rgba(0,0,0,0.5)]" width="1" height="1" fill="#ff4343" stroke="#ff4343" aria-hidden="true">
      <path d="M-16 18L4 47M-86 273L-37 246M500 91.5H450" strokeWidth="4" strokeLinecap="round" />
      <path d="M14 61L-1 53L11 43zM-24 239L-35 253L-41 240zM436 91.5L451 84V99z" stroke="none" />
    </svg>
    <Marker className="top-[60px] left-[493px]">1</Marker>
    <Marker className="top-[121px] left-[681px]">2</Marker>
    <Marker className="top-[575px] -left-[49px]">3</Marker>
  </aside>
);

const Marker = ({ className, children }: { className: string; children: ReactNode }) => (
  <span className={`pointer-events-none absolute flex size-[61px] items-center justify-center rounded-full bg-[#ff4343] font-[Roboto,sans-serif] text-[44px] text-white shadow-[1px_4px_5px_rgba(0,0,0,0.5)] ${className}`}>
    {children}
  </span>
);

export default function App() {
  return (
    <div className="flex h-screen overflow-hidden bg-white pr-1.5 font-['Liberation_Sans',sans-serif] text-[11px] leading-4 text-black">
      <Viewport />
      <TaskPane />
    </div>
  );
}
